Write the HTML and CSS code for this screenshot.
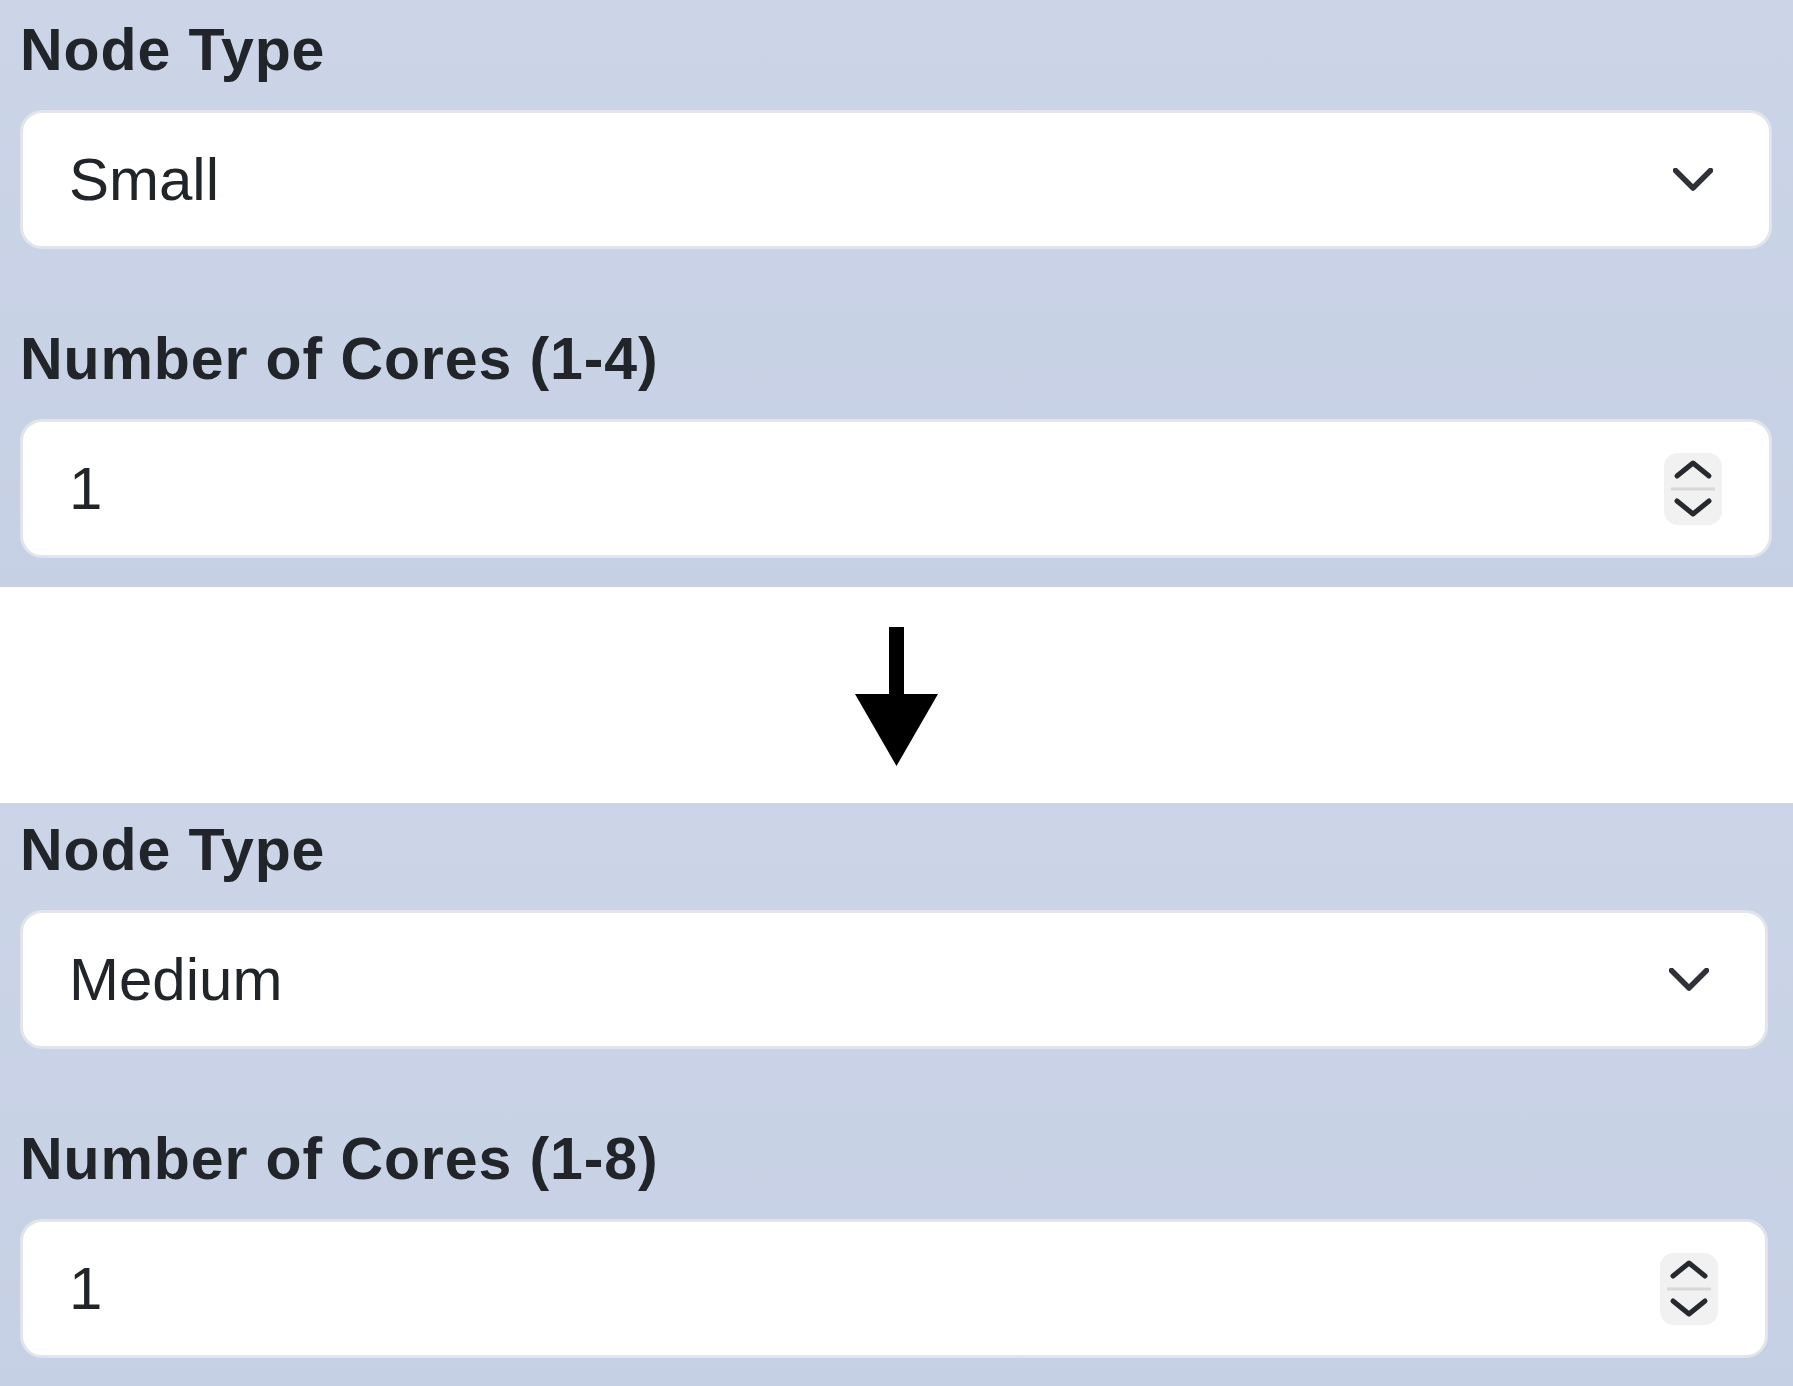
FILE: index.html
```html
<!DOCTYPE html>
<html lang="en">
<head>
    <meta charset="UTF-8">
    <meta name="viewport" content="width=device-width, initial-scale=1.0">
    <title>Node Type change</title>
    <link rel="stylesheet" href="styles.css">
</head>
<body>
    <div class="panel panel-before">
        <div class="field">
            <div class="field-label">Node Type</div>
            <div class="control control-select">
                <span class="control-value">Small</span>
                <svg class="chevron" width="40" height="24" viewBox="0 0 40 24">
                    <polyline points="2.5,2.5 20,20 37.5,2.5" />
                </svg>
            </div>
        </div>
        <div class="field">
            <div class="field-label">Number of Cores (1-4)</div>
            <div class="control control-number">
                <span class="control-value">1</span>
                <svg class="spinner" width="58" height="72" viewBox="0 0 58 72">
                    <rect x="0" y="0" width="58" height="72" rx="14" class="spinner-bg" />
                    <polyline points="13,23 29,10 45,23" class="spinner-arrow" />
                    <line x1="7" y1="36" x2="51" y2="36" class="spinner-line" />
                    <polyline points="13,48 29,61 45,48" class="spinner-arrow" />
                </svg>
            </div>
        </div>
    </div>

    <div class="divider">
        <svg width="83" height="139" viewBox="0 0 83 139">
            <rect x="34" y="0" width="15" height="69" />
            <polygon points="0,67 83,67 41.5,139" />
        </svg>
    </div>

    <div class="panel panel-after">
        <div class="field">
            <div class="field-label">Node Type</div>
            <div class="control control-select">
                <span class="control-value">Medium</span>
                <svg class="chevron" width="40" height="24" viewBox="0 0 40 24">
                    <polyline points="2.5,2.5 20,20 37.5,2.5" />
                </svg>
            </div>
        </div>
        <div class="field">
            <div class="field-label">Number of Cores (1-8)</div>
            <div class="control control-number">
                <span class="control-value">1</span>
                <svg class="spinner" width="58" height="72" viewBox="0 0 58 72">
                    <rect x="0" y="0" width="58" height="72" rx="14" class="spinner-bg" />
                    <polyline points="13,23 29,10 45,23" class="spinner-arrow" />
                    <line x1="7" y1="36" x2="51" y2="36" class="spinner-line" />
                    <polyline points="13,48 29,61 45,48" class="spinner-arrow" />
                </svg>
            </div>
        </div>
    </div>
</body>
</html>
```

FILE: styles.css
```css
body {
    font-family: 'Liberation Sans', Arial, sans-serif;
    background-color: #fff;
    margin: 0;
    padding: 0;
    color: #212529;
}
.panel {
    background: linear-gradient(#ccd5e8, #c6d0e4);
    padding: 8px 21px 29px 20px;
}
.panel-after {
    padding: 5px 25px 28px 20px;
}
.field {
    margin-bottom: 68px;
}
.field:last-child {
    margin-bottom: 0;
}
.field-label {
    font-size: 59px;
    font-weight: bold;
    letter-spacing: 0.9px;
    line-height: 84px;
    margin-bottom: 18px;
}
.control {
    display: flex;
    align-items: center;
    justify-content: space-between;
    box-sizing: border-box;
    height: 139px;
    padding-left: 46px;
    background-color: #fff;
    border: 3px solid #e1e4ea;
    border-radius: 22px;
}
.control-select {
    padding-right: 56px;
}
.control-number {
    padding-right: 47px;
}
.control-value {
    font-size: 60px;
    line-height: 90px;
}
.chevron polyline {
    fill: none;
    stroke: #2f3338;
    stroke-width: 5.5;
    stroke-linecap: round;
    stroke-linejoin: round;
}
.spinner-bg {
    fill: #f1f1f2;
}
.spinner-arrow {
    fill: none;
    stroke: #26292d;
    stroke-width: 5;
    stroke-linecap: round;
    stroke-linejoin: round;
}
.spinner-line {
    stroke: #d8d8da;
    stroke-width: 3;
}
.divider {
    height: 216px;
    box-sizing: border-box;
    padding-top: 40px;
    display: flex;
    justify-content: center;
}
.divider svg {
    fill: #000;
}
```
